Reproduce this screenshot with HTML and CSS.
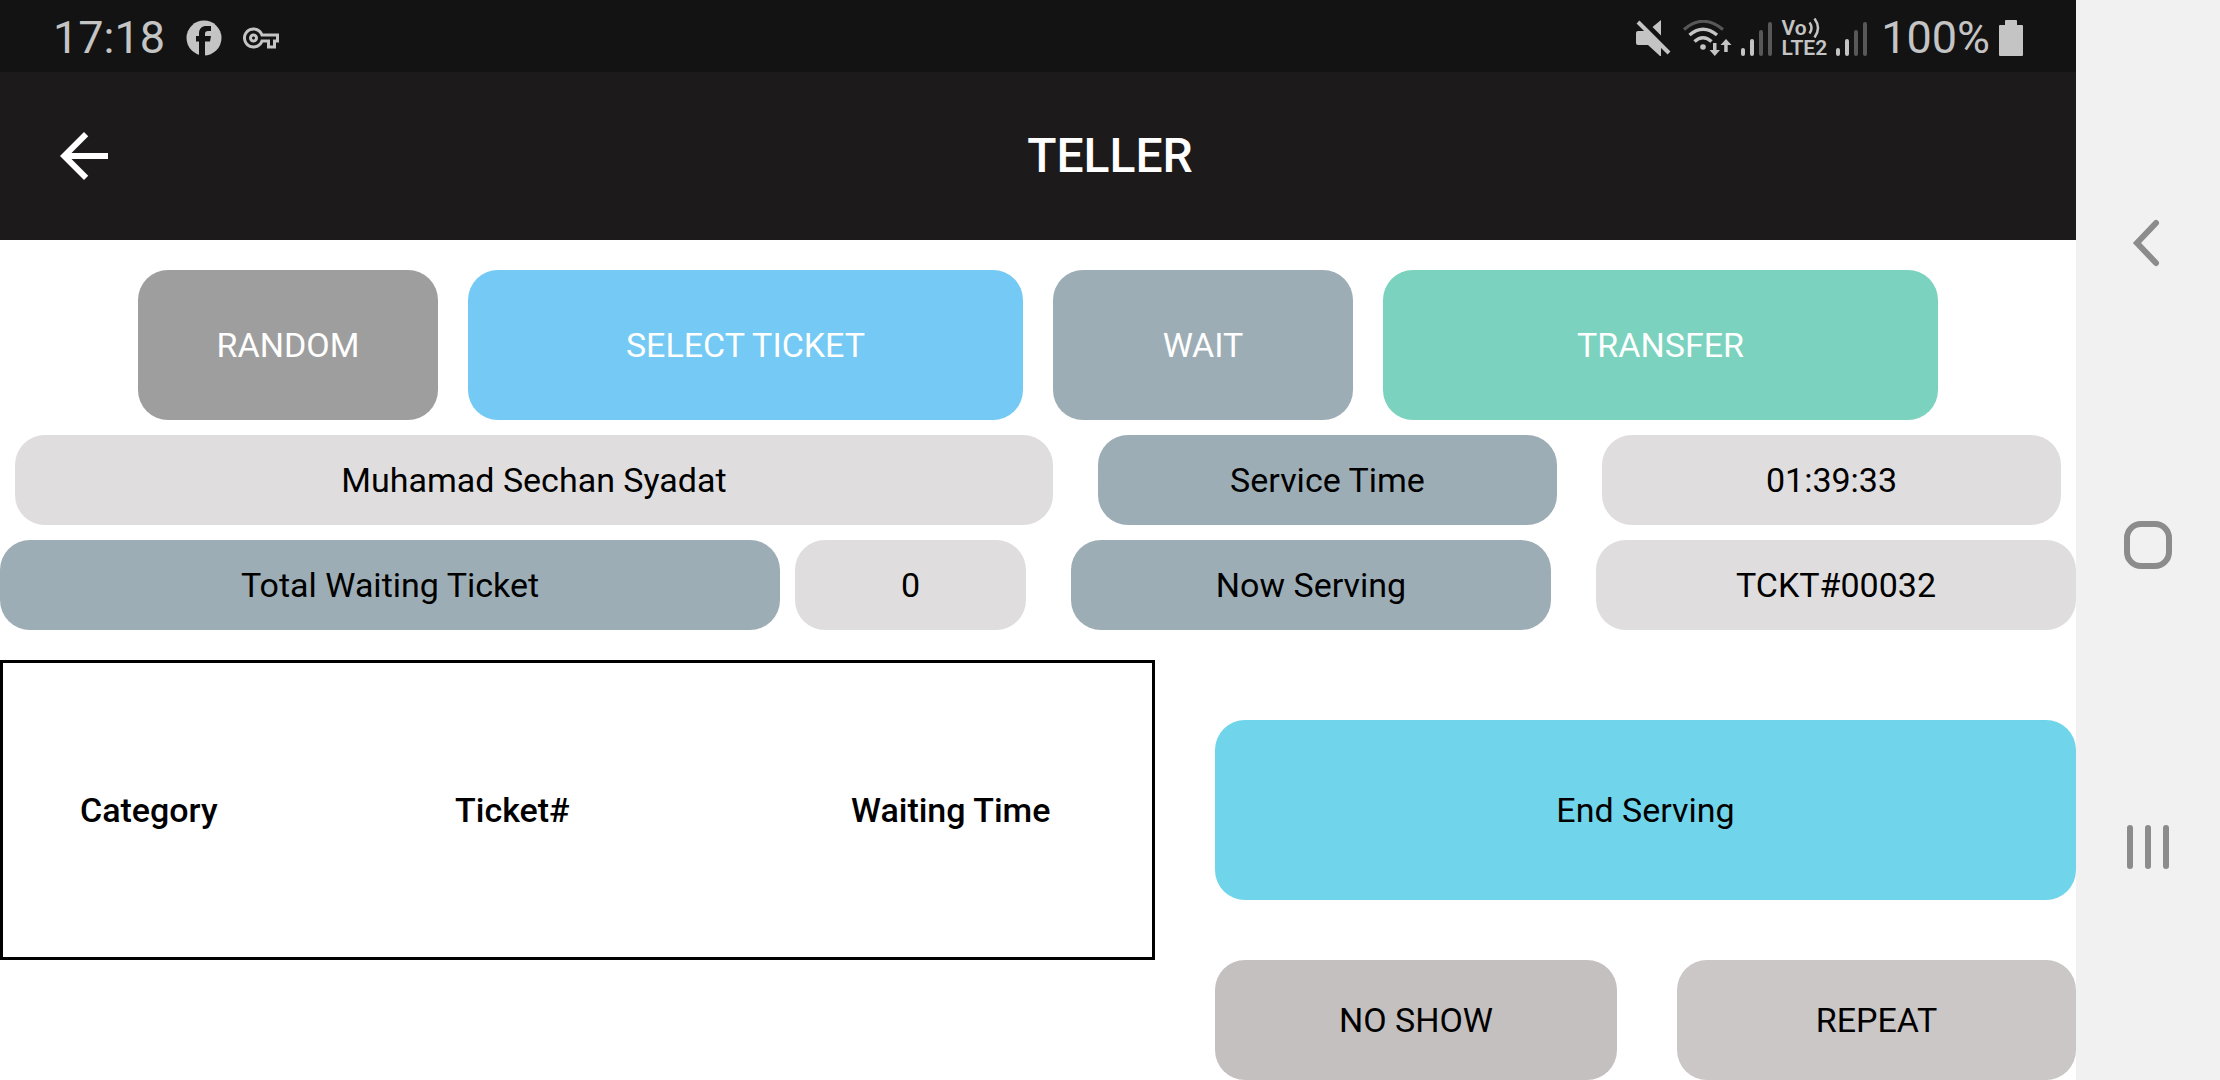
FILE: index.html
```html
<!DOCTYPE html>
<html lang="en">
<head>
<meta charset="utf-8">
<meta name="viewport" content="width=device-width, initial-scale=1">
<title>Teller</title>
<link rel="stylesheet" href="styles.css">
</head>
<body>
<div class="screen">
  <div class="status-bar">
    <div class="status-left">
      <span class="status-text">17:18</span>
      <svg class="icon-facebook" width="36" height="36" viewBox="0 0 36 36" aria-hidden="true">
        <circle cx="18" cy="18" r="17.5" fill="#c4c4c4"/>
        <path d="M13 36V21.500H10V16H13V13.500c0-5 2.800-7.500 7.500-7.500H25v5H22c-2 0-3 1-3 2.500V16H25l-1 5.500H19V36z" fill="#131313"/>
      </svg>
      <svg class="icon-key" width="36" height="36" viewBox="0 0 24 24" aria-hidden="true">
        <path fill="#c4c4c4" d="M22 19h-6v-4h-2.680c-1.140 2.420-3.600 4-6.320 4-3.860 0-7-3.140-7-7s3.140-7 7-7c2.720 0 5.170 1.580 6.320 4H24v6h-2v4zm-4-2h2v-4h2v-2H11.940l-.23-.67C11.010 8.340 9.110 7 7 7c-2.760 0-5 2.240-5 5s2.240 5 5 5c2.110 0 4.010-1.340 4.710-3.330l.23-.67H18v4zM7 15c-1.650 0-3-1.350-3-3s1.350-3 3-3 3 1.350 3 3-1.350 3-3 3zm0-4c-.55 0-1 .45-1 1s.45 1 1 1 1-.45 1-1-.45-1-1-1z"/>
      </svg>
    </div>
    <div class="status-right">
      <svg width="36" height="36" viewBox="0 0 36 36" aria-hidden="true">
        <path fill="#c4c4c4" d="M26 0v15.500L17.500 7zM3 11h9l14 14v11h-1L13 25H3a2 2 0 0 1-2-2V13a2 2 0 0 1 2-2z"/>
        <path d="M3 2L34 33" stroke="#c4c4c4" stroke-width="4"/>
      </svg>
      <svg class="icon-wifi" width="50" height="36" viewBox="0 0 50 36" fill="none" aria-hidden="true">
        <path d="M2 9.500Q21-7 41 9.500" stroke="#585858" stroke-width="3"/>
        <path d="M7.500 15Q21 3.500 35 15M12.500 21.500Q21 14 29.500 21.500" stroke="#c4c4c4" stroke-width="3.500"/>
        <circle cx="21" cy="27" r="2.800" fill="#c4c4c4"/>
        <path d="M31 23h3.500v7H38l-5.200 6-5.300-6H31zM42.200 32v-7H38.500L44 19l5.500 6H45.700v7z" fill="#c4c4c4"/>
      </svg>
      <svg class="icon-signal" width="34" height="36" viewBox="0 0 34 36" stroke-width="4" stroke-linecap="round" aria-hidden="true">
        <path d="M3 30v4M12 21v13" stroke="#c4c4c4"/>
        <path d="M21 12v22M30 4v30" stroke="#585858"/>
      </svg>
      <span class="volte">
        <span class="volte-line">Vo<svg width="14" height="20" viewBox="0 0 14 20" fill="none" stroke="#c4c4c4" stroke-width="2.500" aria-hidden="true"><path d="M2.500 4.500q4 5.500 0 11M7.500 .5q7 9.500 0 19"/></svg></span>
        <span class="volte-line">LTE2</span>
      </span>
      <svg class="icon-signal" width="34" height="36" viewBox="0 0 34 36" stroke-width="4" stroke-linecap="round" aria-hidden="true">
        <path d="M3 30v4M12 21v13" stroke="#c4c4c4"/>
        <path d="M21 12v22M30 4v30" stroke="#585858"/>
      </svg>
      <span class="status-text battery-level">100%</span>
      <svg width="24" height="36" viewBox="0 0 24 36" aria-hidden="true">
        <path fill="#c4c4c4" d="M7 0h10q1 0 1 1v4h5q1 0 1 1v29q0 1-1 1H1q-1 0-1-1V6q0-1 1-1h5V1q0-1 1-1z"/>
      </svg>
    </div>
  </div>

  <header class="app-bar">
    <button class="back" type="button" aria-label="Back">
      <svg width="72" height="72" viewBox="0 0 24 24" aria-hidden="true"><path fill="#fff" d="M20 11H7.830l5.590-5.590L12 4l-8 8 8 8 1.410-1.410L7.830 13H20v-2z"/></svg>
    </button>
    <h1 class="title">TELLER</h1>
  </header>

  <main class="content">
    <div class="actions">
      <button class="tile gray" type="button">RANDOM</button>
      <button class="tile blue" type="button">SELECT TICKET</button>
      <button class="tile slate" type="button">WAIT</button>
      <button class="tile green" type="button">TRANSFER</button>
    </div>
    <div class="service">
      <div class="pill light">Muhamad Sechan Syadat</div>
      <div class="pill slate">Service Time</div>
      <div class="pill light">01:39:33</div>
    </div>
    <div class="serving">
      <div class="waiting">
        <div class="pill slate">Total Waiting Ticket</div>
        <div class="pill light">0</div>
      </div>
      <div class="pill slate">Now Serving</div>
      <div class="pill light">TCKT#00032</div>
    </div>
    <div class="lower">
      <table class="tickets">
        <thead>
          <tr><th class="category" scope="col">Category</th><th class="ticket" scope="col">Ticket#</th><th scope="col">Waiting Time</th></tr>
        </thead>
      </table>
      <div class="controls">
        <button class="tile end" type="button">End Serving</button>
        <div class="pair">
          <button class="tile no-show" type="button">NO SHOW</button>
          <button class="tile repeat" type="button">REPEAT</button>
        </div>
      </div>
    </div>
  </main>
</div>

<nav class="system-nav" aria-label="System">
  <button type="button" aria-label="Back">
    <svg width="48" height="48" viewBox="0 0 48 48" fill="none" stroke="#8c8c8c" stroke-width="6" stroke-linecap="round" aria-hidden="true"><path d="M32 4L13 24l19 20"/></svg>
  </button>
  <button type="button" aria-label="Home">
    <svg width="48" height="48" viewBox="0 0 48 48" fill="none" stroke="#8c8c8c" stroke-width="6" aria-hidden="true"><rect x="3" y="3" width="42" height="42" rx="14"/></svg>
  </button>
  <button type="button" aria-label="Recent apps">
    <svg width="48" height="48" viewBox="0 0 48 48" fill="none" stroke="#8c8c8c" stroke-width="6" stroke-linecap="round" aria-hidden="true"><path d="M6 5v38M24 5v38M42 5v38"/></svg>
  </button>
</nav>
</body>
</html>
```
FILE: styles.css
```css
* {
  box-sizing: border-box;
}

body {
  margin: 0;
  min-height: 100vh;
  display: flex;
  background: #fff;
  color: #000;
  font-family: Roboto, sans-serif;
  font-size: 34px;
  line-height: 40px;
}

button {
  border: 0;
  padding: 0;
  background: none;
  color: inherit;
  font: inherit;
  cursor: pointer;
}

svg {
  display: block;
  flex: none;
}

.screen {
  flex: 1;
  min-width: 0;
}

/* Status bar */
.status-bar {
  display: flex;
  justify-content: space-between;
  align-items: center;
  height: 72px;
  padding: 4px 53px 0;
  background: #131313;
  color: #c4c4c4;
}

.status-left,
.status-right {
  display: flex;
  align-items: center;
}

.status-text {
  font-size: 45px;
  line-height: 52px;
}

.icon-facebook {
  margin-left: 21px;
}

.icon-key {
  margin-left: 21px;
}

.icon-wifi {
  margin-left: 11px;
}

.icon-signal {
  margin-left: 8px;
}

.volte {
  margin-left: 7px;
  font-size: 21px;
  font-weight: 600;
}

.volte-line {
  display: flex;
  line-height: 20px;
}

.battery-level {
  margin: 0 9px 0 12px;
}

/* App bar */
.app-bar {
  display: flex;
  align-items: center;
  gap: 24px;
  height: 168px;
  padding-left: 48px;
  background: #1c1a1b;
  color: #fff;
}

.title {
  flex: 1;
  margin: 0;
  font-size: 48px;
  font-weight: 500;
  line-height: 56px;
  text-align: center;
}

/* Teller panel */
.content {
  display: grid;
  gap: 15px;
  padding-top: 30px;
}

.tile,
.pill {
  display: flex;
  align-items: center;
  justify-content: center;
  border-radius: 30px;
}

.pill {
  height: 90px;
}

.actions {
  display: grid;
  grid-template-columns: 300fr 555fr 300fr 555fr;
  gap: 30px;
  padding: 0 138px;
  color: #fff;
}

.actions .tile {
  height: 150px;
}

.service {
  display: grid;
  grid-template-columns: 1038fr 459fr 459fr;
  gap: 45px;
  padding: 0 15px;
}

.serving {
  display: grid;
  grid-template-columns: 1026fr 480fr 480fr;
  gap: 45px;
}

.waiting {
  display: grid;
  grid-template-columns: 780fr 231fr;
  gap: 15px;
}

.lower {
  display: grid;
  grid-template-columns: 1155fr 861fr;
  gap: 60px;
  align-items: start;
  padding-top: 15px;
}

.tickets {
  width: 100%;
  height: 300px;
  table-layout: fixed;
  border: 3px solid #000;
  border-spacing: 0;
}

.tickets th {
  padding: 0 0 0 77px;
  font-weight: 500;
  text-align: left;
}

.tickets .category {
  width: 375px;
}

.tickets .ticket {
  width: 396px;
}

.controls {
  display: grid;
  gap: 60px;
  padding-top: 60px;
}

.pair {
  display: grid;
  grid-template-columns: 402fr 399fr;
  gap: 60px;
}

.pair .tile {
  height: 120px;
}

.gray {
  background: #9e9e9e;
}

.blue {
  background: #74caf4;
}

.slate {
  background: #9dadb5;
}

.green {
  background: #7bd2be;
}

.light {
  background: #dfdddd;
}

.end {
  height: 180px;
  background: #70d5ea;
}

.no-show {
  background: #c4c0bf;
}

.repeat {
  background: #cbc7c6;
}

/* System navigation */
.system-nav {
  display: flex;
  flex-direction: column;
  width: 144px;
  padding: 92px 0 82px;
  background: #f1f1f1;
}

.system-nav button {
  flex: 1;
  display: flex;
  align-items: center;
  justify-content: center;
}
```
